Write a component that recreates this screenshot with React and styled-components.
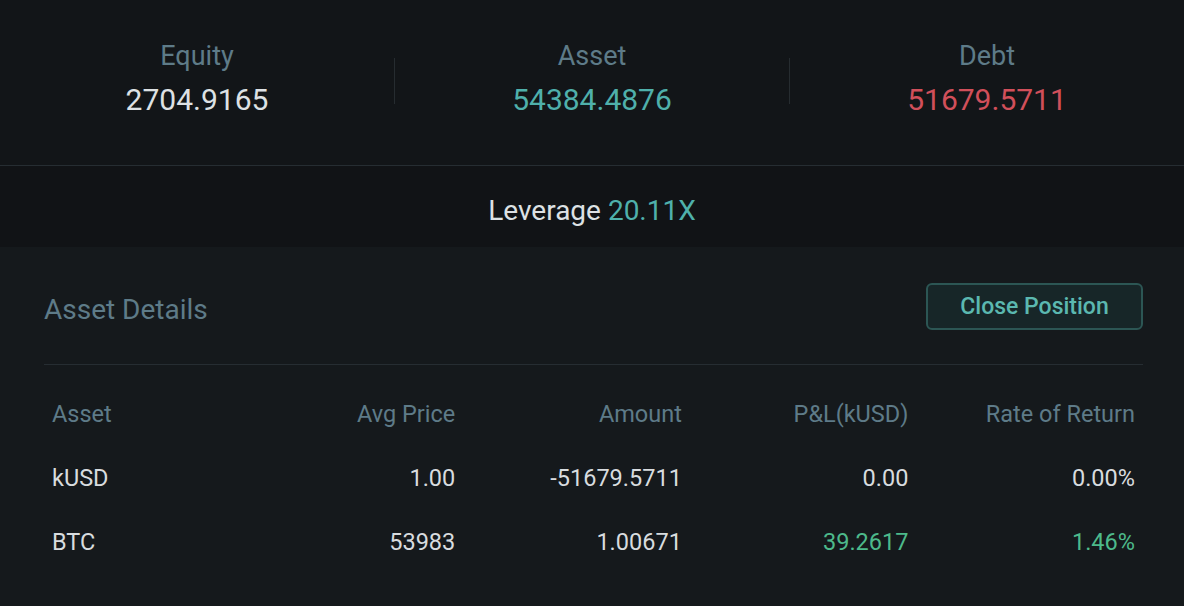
import styled, { createGlobalStyle } from "styled-components";

const GlobalStyle = createGlobalStyle`
  html, body {
    margin: 0;
    padding: 0;
    background: #121518;
  }
  body {
    font-family: Roboto, "Liberation Sans", sans-serif;
    -webkit-font-smoothing: antialiased;
  }
`;

const Page = styled.div`
  width: 1184px;
  height: 606px;
  display: flex;
  flex-direction: column;
  background: #121518;
  overflow: hidden;
`;

const Summary = styled.section`
  display: flex;
  align-items: center;
  padding: 39px 0 45px;
  border-bottom: 1px solid #262d32;
`;

const Stat = styled.div`
  flex: 1;
  display: flex;
  flex-direction: column;
  align-items: center;
  gap: 7px;
`;

const StatLabel = styled.div`
  font-size: 27px;
  line-height: 34px;
  color: #5e7b88;
`;

const StatValue = styled.div`
  font-size: 30px;
  line-height: 40px;
  color: ${(p) => p.$color || "#dde1e4"};
`;

const VDivider = styled.div`
  width: 1px;
  height: 46px;
  margin-top: 2px;
  background: #262c30;
`;

const LeverageBar = styled.div`
  display: flex;
  justify-content: center;
  padding: 27px 0 18px;
  background: #111316;
  font-size: 28px;
  line-height: 36px;
  color: #dde1e4;
`;

const Accent = styled.span`
  color: #4fb0ab;
`;

const Panel = styled.section`
  flex: 1;
  background: #15191c;
  padding: 36px 41px 0 44px;
`;

const PanelHead = styled.div`
  display: flex;
  align-items: center;
  justify-content: space-between;
  padding-bottom: 34px;
  border-bottom: 1px solid #262d32;
`;

const Title = styled.h2`
  margin: 7px 0 0;
  font-size: 28px;
  line-height: 34px;
  font-weight: 400;
  color: #5e7b88;
`;

const Button = styled.button`
  width: 217px;
  height: 47px;
  padding-top: 1px;
  border: 2px solid #2c5654;
  border-radius: 6px;
  background: #172628;
  color: #5bb8b0;
  font-family: inherit;
  font-size: 23px;
  font-weight: 500;
  cursor: pointer;
`;

const Table = styled.div`
  margin-top: 17px;
  padding: 0 8px;
`;

const Row = styled.div`
  display: grid;
  grid-template-columns: 0.78fr repeat(4, 1fr);
  height: 64px;
  align-items: center;
  font-size: 23.5px;
  color: ${(p) => (p.$head ? "#5e7b88" : "#d8dcdf")};
`;

const Cell = styled.div`
  text-align: ${(p) => (p.$left ? "left" : "right")};
  color: ${(p) => p.$color || "inherit"};
`;

const stats = [
  { label: "Equity", value: "2704.9165" },
  { label: "Asset", value: "54384.4876", color: "#4fb0ab" },
  { label: "Debt", value: "51679.5711", color: "#d14f5a" },
];

const green = "#4dba8b";

const rows = [
  { asset: "kUSD", avg: "1.00", amount: "-51679.5711", pnl: "0.00", rate: "0.00%" },
  { asset: "BTC", avg: "53983", amount: "1.00671", pnl: "39.2617", rate: "1.46%", color: green },
];

export default function App() {
  return (
    <Page>
      <GlobalStyle />
      <Summary>
        {stats.map((s, i) => (
          <>
            {i > 0 && <VDivider key={`d${i}`} />}
            <Stat key={s.label}>
              <StatLabel>{s.label}</StatLabel>
              <StatValue $color={s.color}>{s.value}</StatValue>
            </Stat>
          </>
        ))}
      </Summary>
      <LeverageBar>
        Leverage&nbsp;<Accent>20.11X</Accent>
      </LeverageBar>
      <Panel>
        <PanelHead>
          <Title>Asset Details</Title>
          <Button>Close Position</Button>
        </PanelHead>
        <Table>
          <Row $head>
            <Cell $left>Asset</Cell>
            <Cell>Avg Price</Cell>
            <Cell>Amount</Cell>
            <Cell>P&amp;L(kUSD)</Cell>
            <Cell>Rate of Return</Cell>
          </Row>
          {rows.map((r) => (
            <Row key={r.asset}>
              <Cell $left>{r.asset}</Cell>
              <Cell>{r.avg}</Cell>
              <Cell>{r.amount}</Cell>
              <Cell $color={r.color}>{r.pnl}</Cell>
              <Cell $color={r.color}>{r.rate}</Cell>
            </Row>
          ))}
        </Table>
      </Panel>
    </Page>
  );
}
